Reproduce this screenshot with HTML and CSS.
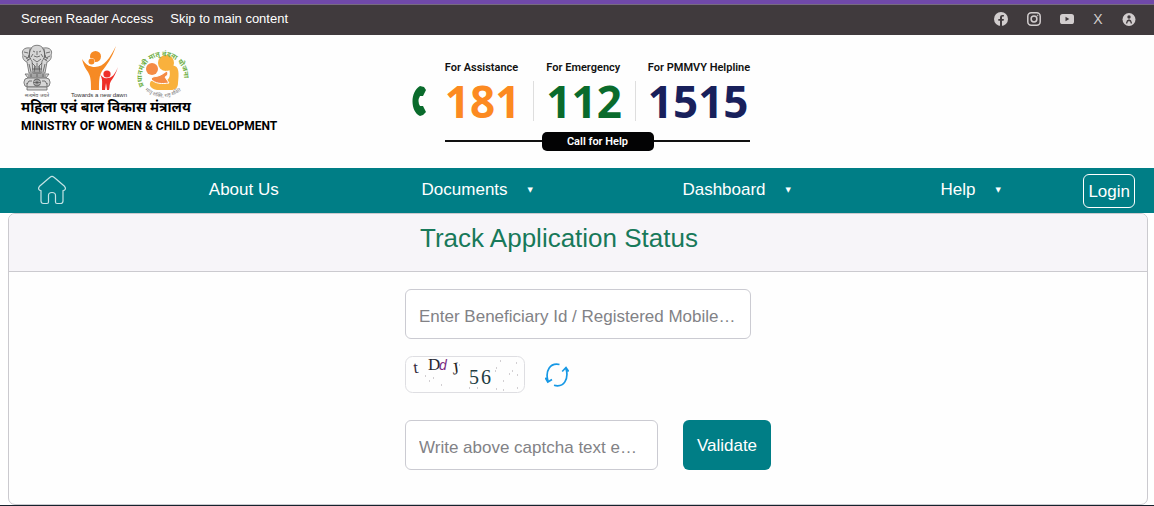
FILE: index.html
```html
<!DOCTYPE html>
<html lang="en">
<head>
<meta charset="utf-8">
<meta name="viewport" content="width=device-width, initial-scale=1">
<title>Track Application Status</title>
<link rel="stylesheet" href="styles.css">
</head>
<body>
<div class="topbar">
  <nav class="access" aria-label="Accessibility">
    <a href="#reader">Screen Reader Access</a>
    <a href="#main">Skip to main content</a>
  </nav>
  <nav class="social" aria-label="Social">
    <a href="#facebook" aria-label="Facebook"><svg width="14" height="14" viewBox="0 0 14 14"><circle cx="7" cy="7" r="7" fill="#d2cdce"/><path d="M6 14V8.800H4.300V6.900H6V5.400C6 3.700 7 2.900 8.400 2.900l1.500.1v1.600h-.9c-.8 0-1 .4-1 1v1.300h1.900l-.3 1.900H8V14z" fill="#403a3d"/></svg></a>
    <a href="#instagram" aria-label="Instagram"><svg width="14" height="14" viewBox="0 0 14 14" fill="none" stroke="#d2cdce" stroke-width="1.500"><rect x=".8" y=".8" width="12.400" height="12.400" rx="3.500"/><circle cx="7" cy="7" r="2.900"/><circle cx="10.600" cy="3.400" r=".4" stroke-width="1"/></svg></a>
    <a href="#youtube" aria-label="YouTube"><svg width="14" height="14" viewBox="0 0 14 14"><rect y="2" width="14" height="10" rx="2.600" fill="#d2cdce"/><path d="M5.500 4.800v4.400L9.300 7z" fill="#403a3d"/></svg></a>
    <a class="x-link" href="#x">X</a>
    <a href="#accessibility" aria-label="Accessibility options"><svg width="14" height="14" viewBox="0 0 14 14"><circle cx="7" cy="7.500" r="6.500" fill="#d2cdce"/><circle cx="7" cy="5" r="1.700" fill="#403a3d"/><path d="M4.500 11.500 5.500 8.800 7 8l1.500.8 1 2.700M7 8v1.500" stroke="#403a3d" stroke-width="1.300" fill="none"/></svg></a>
  </nav>
</div>

<header class="masthead">
  <div class="brand">
    <div class="logos">
      <svg width="32" height="54" viewBox="0 0 32 54" role="img" aria-label="State Emblem of India">
        <g fill="#d6d6d6" stroke="#666" stroke-width=".8">
          <path d="M9 3C3 2 0 6 2 10c-1 3 1 6 4 7l2 11h16l2-11c3-1 5-4 4-7 2-4-1-8-7-7z"/>
          <path d="M10 4c1-5 11-5 12 0 3 4 2 9-1 12l-1 12h-8l-1-12c-3-3-4-8-1-12z"/>
          <path d="M4 29h24l-3 4H7z"/><rect x="3" y="33" width="26" height="9" rx="4"/><path d="M6 42h20v3H6z"/>
        </g>
        <g fill="none" stroke="#555" stroke-width=".8">
          <path d="M12 6l2 1M20 6l-2 1M16 6v4M13 11q3 2 6 0M12 14l4 3 4-3M11 18l3 3-1 6M21 18l-3 3 1 6M14 21v7M16 18v10M18 21v7M3 7l4 1M3 11l4 2 1-3M29 7l-4 1M29 11l-4 2-1-3M6 16l4-3M26 16l-4-3M8 19l2 8M24 19l-2 8M9 4L8 13M23 4l1 9M12 9l-2 3M20 9l2 3M11 24h10M5 13l3 2M27 13l-3 2"/>
          <circle cx="16" cy="37.500" r="3.500"/><path d="M12.500 37.500h7M16 34v7M13.500 35l5 5M18.500 35l-5 5M6 39l2-3h3M26 39l-2-3h-3M6 41v-3M26 41v-3M7 31h18M10 29v3M16 29v3M22 29v3"/>
        </g>
        <text class="logo-caption" x="16" y="52" font-size="5" fill="#555" text-anchor="middle">सत्यमेव जयते</text>
      </svg>
      <svg width="56" height="54" viewBox="0 0 56 54" role="img" aria-label="Towards a new dawn">
        <path d="M11 14c4 6 8 8 13 8 9 0 15-9 21-21-4 12-9 19-14 25-3 5-3 10-3 19h-8c0-8 0-13-3-18-3-4-5-8-6-13z" fill="#f68a24"/>
        <circle cx="24.500" cy="11.500" r="5.500" fill="#f68a24"/><circle cx="20" cy="17" r="4" fill="#fff"/><circle cx="20.500" cy="16.500" r="3" fill="#f68a24"/>
        <path d="M29 29c3 4 5 5 8 4 4 0 7-4 10-11-2 6-4 10-7 14-2 3-1 6-2 9h-2l-1-7-1 7h-3c0-8 1-10-2-16z" fill="#ee2f28"/><circle cx="36" cy="29" r="3.600" fill="#ee2f28"/>
        <text class="logo-caption" x="28" y="52" font-size="6" fill="#333" text-anchor="middle">Towards a new dawn</text>
      </svg>
      <svg width="56" height="54" viewBox="0 0 56 54" role="img" aria-label="Pradhan Mantri Matru Vandana Yojana">
        <defs><path id="ring-top" d="M9 41A21 21 0 1 1 47 41"/><path id="ring-bottom" d="M10 45Q29 60 48 44"/></defs>
        <path d="M34 21C45 18 44 28 43 38c0 5-3 7-7 7H22c-6-1-9-5-6-9 8 1 15 2 18-3 2-4 0-8 0-12z" fill="#f9b13d"/>
        <circle cx="31" cy="18" r="8" fill="#f9b13d"/><circle cx="17" cy="24" r="6" fill="#f58b45"/>
        <path d="M16 34c2-3 4-2 7-3 4-1 7-4 9-5 2 3 0 5-2 6l4 6c-7 1-14 1-18-4z" fill="#f58b45" stroke="#fff"/>
        <text class="logo-caption" font-size="7" font-weight="bold" fill="#70b046"><textPath href="#ring-top">प्रधानमंत्री मातृ वंदना योजना</textPath></text>
        <text class="logo-caption" font-size="5" fill="#777"><textPath href="#ring-bottom">मातृ शक्ति, राष्ट्र शक्ति</textPath></text>
      </svg>
    </div>
    <div class="ministry-hi" lang="hi">महिला एवं बाल विकास मंत्रालय</div>
    <div class="ministry-en">MINISTRY OF WOMEN &amp; CHILD DEVELOPMENT</div>
  </div>

  <section class="helpline" aria-label="Helpline numbers">
    <svg class="phone" width="16" height="32" viewBox="0 0 16 32" aria-hidden="true"><path d="M8 1 12 2 14 5 11 11 8 11Q5 16 8 21l3 0 3 6-3 3-3 1C-2 26-2 7 8 1z" fill="#0a6b2c"/></svg>
    <div class="help-body">
      <div class="numbers">
        <div class="number orange"><span>For Assistance</span><strong>181</strong></div>
        <div class="number green"><span>For Emergency</span><strong>112</strong></div>
        <div class="number navy"><span>For PMMVY Helpline</span><strong>1515</strong></div>
      </div>
      <div class="call-row"><span class="call">Call for Help</span></div>
    </div>
  </section>
</header>

<nav class="mainnav" aria-label="Main">
  <ul class="menu">
    <li><a href="#home" aria-label="Home"><svg width="28" height="30" viewBox="0 0 28 30" fill="none" stroke="#c5e3e5" stroke-width="1.200" stroke-linejoin="round"><path d="M12 2.300q2-2 4 0l10.500 9c1.800 2.200.7 4.200-1.500 4.200v10.500q0 2.500-2.500 2.500H19q-1.500 0-1.500-1.500v-6.500q0-3-3.500-3t-3.500 3V27q0 1.500-1.500 1.500H5.500Q3 28.500 3 26V15.500c-2.200 0-3.300-2-1.500-4.200z"/></svg></a></li>
    <li><a href="#about">About Us</a></li>
    <li><a href="#documents">Documents<span class="caret">▼</span></a></li>
    <li><a href="#dashboard">Dashboard<span class="caret">▼</span></a></li>
    <li><a href="#help">Help<span class="caret">▼</span></a></li>
  </ul>
  <button class="login" type="button">Login</button>
</nav>

<main class="card" id="main">
  <h1 class="card-title">Track Application Status</h1>
  <form class="track-form">
    <input class="field beneficiary" type="text" aria-label="Beneficiary Id or registered mobile number" placeholder="Enter Beneficiary Id / Registered Mobile Number">
    <div class="captcha-row">
      <svg class="captcha" width="120" height="37" viewBox="0 0 120 37" role="img" aria-label="Captcha">
        <rect x=".5" y=".5" width="119" height="36" rx="7" fill="#fefefe" stroke="#dedee2"/>
        <g class="captcha-text" font-size="17">
          <text x="9" y="17" fill="#342a3c" transform="rotate(-7 12 17)">t</text><text x="23" y="14" fill="#282832">D</text>
          <text class="captcha-sans" x="34" y="14" font-size="14" font-style="italic" fill="#7a2880">d</text><text x="48" y="18" fill="#222" transform="rotate(-8 51 18)">J</text>
          <text x="64" y="28" font-size="20" fill="#213c42">5</text><text x="76" y="28" font-size="20" fill="#213c42">6</text>
        </g>
        <path d="M20 20h1M24 25h1M36 29h1M28 22h1M54 9h1M69 16h1M91 12h1M95 5h1M107 15h1M112 19h1M111 7h1M98 25h1M91 33h1M98 34h1M64 32h1M72 32h1M112 32h1M90 15h1M104 18h1" stroke="#a6a0a6"/>
      </svg>
      <button class="refresh" type="button" aria-label="Refresh captcha"><svg width="24" height="24" viewBox="0 0 24 24" fill="none" stroke="#1698e5" stroke-width="1.700"><path d="M14.500 1.500C5-.5 0 8 3 18M.3 14.800 2.800 19l4.200-2.500M9 22.300C19 25 24 16 21 5.500M17.200 8.500 21 4.500l2.700 4"/></svg></button>
    </div>
    <div class="submit-row">
      <input class="field" type="text" aria-label="Captcha text" placeholder="Write above captcha text exactly">
      <button class="validate" type="button">Validate</button>
    </div>
  </form>
</main>
<div class="page-end"></div>
</body>
</html>
```

FILE: styles.css
```css
* { box-sizing: border-box; }
body { margin: 0; background: #fff; color: #000; font-family: "Liberation Sans", Arial, sans-serif; }
a { color: inherit; text-decoration: none; }
svg { display: block; }
button, input { font: inherit; }

.topbar { display: flex; justify-content: space-between; align-items: center; height: 35px; padding: 0 18px 2px 21px; border-top: 4px solid #7049a9; background: #403a3d; box-shadow: inset 0 1px #776b80; color: #fff; font-size: 13px; }
.access { display: flex; gap: 17px; }
.social { display: flex; align-items: center; gap: 19px; color: #d2cdce; }
.x-link { width: 10px; font-size: 14px; text-align: center; }

.masthead { display: grid; grid-template-columns: 1fr auto 1fr; align-items: start; height: 133px; background: #fefefe; }
.brand { padding: 10px 0 0 21px; white-space: nowrap; }
.logos { display: flex; gap: 18px; }
.logos svg { overflow: visible; }
.logos svg:last-child { margin-left: -10px; }
.logo-caption { font-family: "Liberation Sans", "Noto Sans Devanagari", sans-serif; }
.ministry-hi { font-family: "Noto Sans Devanagari", "Noto Sans", sans-serif; font-size: 14px; font-weight: 700; line-height: 19px; }
.ministry-en { font-family: Roboto, sans-serif; font-size: 12px; font-weight: 700; line-height: 16px; }

.helpline { display: flex; padding: 26px 0 0 8px; font-family: Roboto, sans-serif; }
.phone { margin: 24px 17px 0 0; }
.numbers { display: flex; }
.number { display: flex; flex-direction: column; }
.number span { color: #111; font-size: 11px; font-weight: 600; line-height: 14px; }
.number strong { margin-top: 6px; font-family: "Noto Sans", sans-serif; font-size: 44px; font-weight: 700; line-height: 40px; }
.number + .number { padding-left: 13px; margin-left: 13px; background: linear-gradient(#dedede, #dedede) 0 20px / 1px 41px no-repeat; }
.orange strong { color: #fc8a21; }
.green strong { color: #0a6b2c; }
.navy strong { color: #18205b; }
.call-row { display: flex; justify-content: center; margin-top: 11px; background: linear-gradient(#111, #111) 0 8px / 100% 2px no-repeat; }
.call { width: 112px; border-radius: 5px; background: #030304; color: #fff; font-size: 11px; font-weight: 600; line-height: 19px; text-align: center; }

.mainnav { display: flex; align-items: center; height: 45px; padding: 0 19px 0 38px; background: #007e86; color: #fff; font-size: 17px; }
.menu { display: flex; flex: 1; align-items: center; justify-content: space-between; margin: 0 76px 2px 0; padding: 0; list-style: none; }
.menu a { display: flex; align-items: center; }
.caret { width: 12px; margin-left: 20px; font-family: "DejaVu Sans", sans-serif; font-size: 7px; }
.login { height: 34px; padding: 2px 4px 0; border: 1px solid #fff; border-radius: 6px; background: transparent; color: #fff; font-size: 17px; }

.card { margin: 0 6px 0 8px; border: 1px solid #cbcacf; border-radius: 7px; background: #fefefe; overflow: hidden; }
.card-title { margin: 0; padding: 7px 38px 15px 0; border-bottom: 1px solid #cbcacf; background: #f7f5f9; color: #18795a; font-size: 26px; font-weight: 400; line-height: 35px; text-align: center; }
.track-form { width: 386px; margin: 0 auto; padding: 17px 0 34px 20px; }
.field { display: block; min-width: 0; height: 50px; padding: 5px 13px 0; border: 1px solid #cbcbd2; border-radius: 6px; background: #fff; font-size: 17px; text-overflow: ellipsis; }
.field::placeholder { color: #828286; opacity: 1; }
.beneficiary { width: calc(100% - 20px); }
.captcha-row { display: flex; align-items: center; gap: 20px; margin: 17px 0 27px; }
.captcha-text { font-family: "Liberation Serif", serif; }
.captcha-sans { font-family: "Liberation Sans", sans-serif; }
.refresh { padding: 0; border: 0; background: none; }
.submit-row { display: flex; gap: 25px; }
.submit-row .field { flex: 1; }
.validate { width: 88px; padding: 1px 0 0; border: 0; border-radius: 6px; background: #007e86; color: #fff; font-size: 17px; }
.page-end { height: 1px; background: #16222d; }
```
